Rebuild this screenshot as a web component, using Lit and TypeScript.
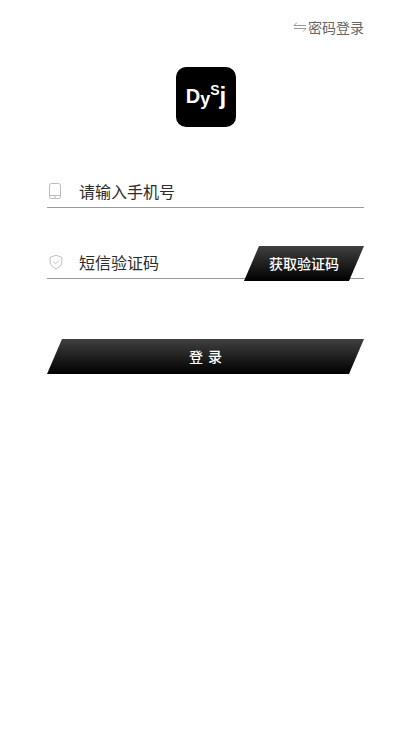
import { LitElement, html, css } from "lit";
import { customElement } from "lit/decorators.js";

@customElement("app-root")
export class AppRoot extends LitElement {
  static styles = css`
    :host {
      display: block;
      min-height: 731px;
      background: #fff;
      font-family: "Noto Sans CJK SC", "Liberation Sans", sans-serif;
      color: #333;
    }
    .page {
      display: flex;
      flex-direction: column;
      padding: 17px 47px 0;
    }
    .switch {
      display: flex;
      justify-content: flex-end;
      align-items: center;
      gap: 1px;
      height: 20px;
      font-size: 14px;
      line-height: 20px;
      color: #666;
    }
    .switch svg { display: block; }
    .logo {
      align-self: center;
      width: 60px;
      height: 60px;
      margin-top: 30px;
      margin-left: 1px;
      border-radius: 10px;
      background: #000;
      color: #fff;
      display: flex;
      align-items: center;
      justify-content: center;
      font-family: "Liberation Sans", sans-serif;
      font-weight: 700;
      font-size: 20px;
      line-height: 1;
    }
    .logo .d { transform: translateY(-1px); }
    .logo .y { font-size: 18px; transform: translateY(2px); }
    .logo .s { font-size: 14px; transform: translateY(-7px); }
    .logo .j { font-size: 24px; transform: translateY(-1px); }
    .field {
      display: flex;
      align-items: center;
      height: 36px;
      border-bottom: 1px solid #999;
      position: relative;
    }
    .field.phone { margin-top: 44px; }
    .field.code { margin-top: 34px; }
    .field svg { display: block; flex: none; }
    .icon {
      width: 32px;
      display: flex;
      padding: 4px 0 0 2px;
      box-sizing: border-box;
    }
    .label { font-size: 16px; line-height: 24px; color: #2b2b2b; padding-top: 4px; }
    .sms {
      position: absolute;
      right: 0;
      bottom: -3px;
      width: 120px;
      height: 35px;
      box-sizing: border-box;
      padding-bottom: 2px;
      display: flex;
      align-items: center;
      justify-content: center;
      font-size: 14px;
      font-weight: 500;
      color: #fff;
      background: linear-gradient(#404040, #000);
      clip-path: polygon(15px 0, 100% 0, 105px 100%, 0 100%);
    }
    .login {
      margin-top: 60px;
      height: 35px;
      box-sizing: border-box;
      padding-bottom: 2px;
      display: flex;
      align-items: center;
      justify-content: center;
      font-size: 14px;
      font-weight: 500;
      word-spacing: 2px;
      color: #fff;
      background: linear-gradient(#404040, #000);
      clip-path: polygon(15px 0, 100% 0, calc(100% - 15px) 100%, 0 100%);
      white-space: pre;
    }
  `;

  render() {
    return html`
      <div class="page">
        <div class="switch">
          <svg width="14" height="10" viewBox="0 0 14 10" fill="none" stroke="#999" stroke-width="1">
            <path d="M1 3.5h12M1 3.5l3-3M13 6.5H1M13 6.5l-3 3" />
          </svg>
          <span>密码登录</span>
        </div>
        <div class="logo"><span class="d">D</span><span class="y">y</span><span class="s">S</span><span class="j">j</span></div>
        <div class="field phone">
          <span class="icon">
            <svg width="12" height="16" viewBox="0 0 12 16" fill="none" stroke="#bbb" stroke-width="1">
              <rect x="0.5" y="0.5" width="11" height="15" rx="2" />
              <path d="M0.500 12.500h11M5 14h2" />
            </svg>
          </span>
          <span class="label">请输入手机号</span>
        </div>
        <div class="field code">
          <span class="icon">
            <svg width="14" height="16" viewBox="0 0 15 16" fill="none" stroke="#bbb" stroke-width="1">
              <path d="M7.5 .8 13.8 3v5c0 3.400-2.800 5.800-6.300 7.200C4 13.800 1.200 11.400 1.200 8V3z" />
              <path d="M4.500 7.500 7 10l3.800-3.800" />
            </svg>
          </span>
          <span class="label">短信验证码</span>
          <div class="sms">获取验证码</div>
        </div>
        <div class="login">登 录</div>
      </div>
    `;
  }
}
